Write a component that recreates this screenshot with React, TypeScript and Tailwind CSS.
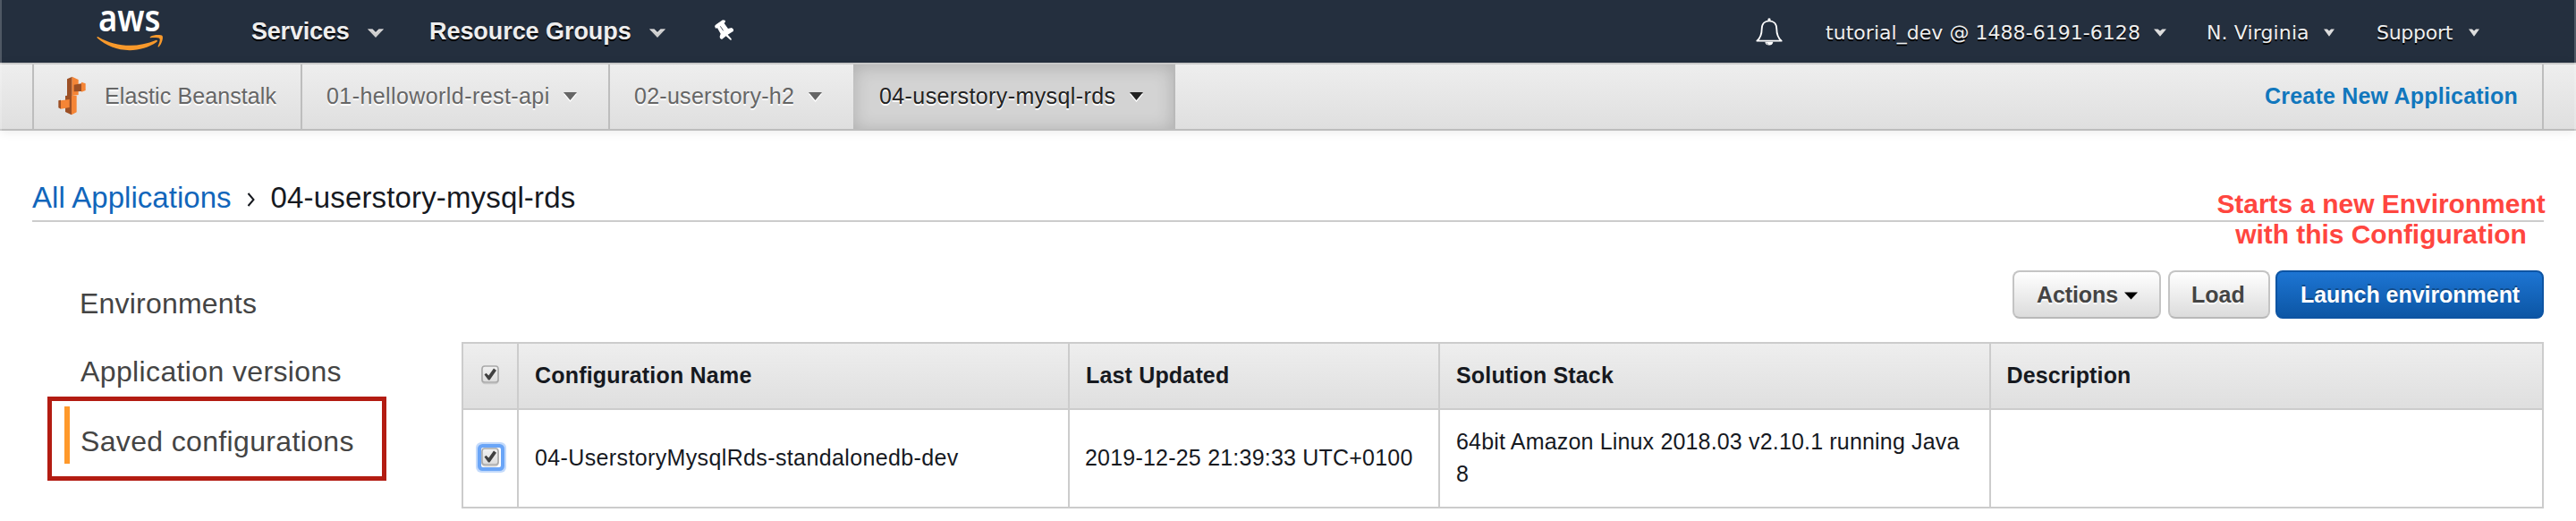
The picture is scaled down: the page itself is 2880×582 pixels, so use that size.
import React from "react";

function AwsLogo() {
  return (
    <svg className="overflow-visible" width="76" height="48" viewBox="0 0 76 48" aria-label="aws">
      <text
        x="2"
        y="23.5"
        fontFamily="'Noto Sans', 'Open Sans', sans-serif"
        fontSize="41"
        fontWeight="600"
        fill="#fff"
        textLength="69.5"
        lengthAdjust="spacingAndGlyphs"
      >
        aws
      </text>
      <path
        d="M0.4 30.6 C0.6 29.8 1.4 29.9 2.2 30.4 C13 36.6 25 39.7 37.5 39.7 C47 39.7 57 37.7 66.2 33.9 C67.6 33.3 68.7 34.8 67.4 35.8 C59 42 47.3 45.2 37 45.2 C23 45.2 10.5 40.2 0.8 31.6 Z"
        fill="#f8992b"
      />
      <path
        d="M60.3 31.2 C59.4 31.3 59.3 30.5 60.1 30 C63.9 27.4 72.3 27.7 73.5 29 C74.8 30.7 73.2 37.9 69.7 41.2 C69 41.8 68.3 41.5 68.6 40.7 C69.5 38.7 71.4 33.6 70.5 32.2 C69.5 30.8 63.5 30.9 60.3 31.2 Z"
        fill="#f8992b"
      />
    </svg>
  );
}

function NavCaret() {
  return (
    <svg width="18" height="10" viewBox="0 0 18 10">
      <path d="M0 0.5 H5.5 L9 4 L12.5 0.5 H18 L9 10 Z" fill="#ccc" />
      <path d="M0 0.5 H5.5 L9 4 L12.5 0.5 H18 L16.5 2 H13 L9 6 L5 2 H1.5 Z" fill="#eee" opacity="0.5" />
    </svg>
  );
}

function SmallCaret({ className }: { className: string }) {
  return (
    <svg className={className} height="9" viewBox="0 0 14 9" preserveAspectRatio="none">
      <path d="M0 0.5 H4.5 L7 2.5 L9.5 0.5 H14 L7 8.8 Z" fill="#ddd" />
    </svg>
  );
}

function TabCaret({ fill }: { fill: string }) {
  return (
    <svg width="15" height="11" viewBox="0 0 15 11">
      <path d="M0 2 H15 L7.5 11 Z" fill="#fff" />
      <path d="M0 0 H15 L7.5 9 Z" fill={fill} />
    </svg>
  );
}

function PinIcon() {
  return (
    <svg width="22" height="24" viewBox="957 66 66 72">
      <path
        d="M957 87 L962 82 L984 67 L992 68 L993 73 L989 78 L1002 96 L1014 93 L1020 98 L1020 104 L1001 116 L1013 130 L1013 134 L1010 134 L995 121 L981 132 L975 128 L974 122 L977 113 L966 94 L960 95 Z"
        fill="#fff"
      />
      <path d="M976 88 L986 103" stroke="#242f3e" strokeWidth="2.5" />
    </svg>
  );
}

function BellIcon() {
  return (
    <svg width="30" height="31" viewBox="131 59 90 93">
      <path
        d="M135 136 H217 C205 125 201 116 201 97 C201 78 190 69 176 69 C162 69 151 78 151 97 C151 116 147 125 135 136 Z"
        fill="none"
        stroke="#fff"
        strokeWidth="5.5"
        strokeLinejoin="round"
      />
      <circle cx="176" cy="65" r="5" fill="#fff" />
      <path d="M162 139 H189 C188 147 183 150.5 176 150.5 C169 150.5 163 147 162 139 Z" fill="#fff" />
      <path d="M167 142 C168 145 170 147 173 148" stroke="#242f3e" strokeWidth="1.5" fill="none" />
    </svg>
  );
}

function BeanstalkIcon() {
  return (
    <svg width="31" height="44" viewBox="196 256 93 132">
      <path d="M226 266 L243 258 V322 H226 Z" fill="#9d5025" />
      <path d="M243 258 L264 268 V319 L243 322 Z" fill="#f58536" />
      <path d="M249 285 L274 281 V307 L249 308 Z" fill="#9d5025" />
      <path d="M274 276 L288 281 V304 L274 309 Z" fill="#f58536" />
      <path d="M220 322 L241 320 V386 L220 376 Z" fill="#9d5025" />
      <path d="M241 322 H258 V377 L241 386 Z" fill="#f58536" />
      <path d="M197 338 L205 336 V366 L197 362 Z" fill="#9d5025" />
      <path d="M205 338 L234 334 V361 L205 366 Z" fill="#f58536" />
    </svg>
  );
}

function Checkbox({ focused = false }: { focused?: boolean }) {
  return (
    <span
      className={
        focused
          ? "flex size-[22px] rounded-[2px] bg-white shadow-[0_0_0_4px_#6aa5f7,0_0_0_6px_#c3dafb]"
          : "flex size-[22px]"
      }
    >
      <svg width="22" height="22" viewBox="0 0 22 22">
        <defs>
          <linearGradient id="box" x1="0" y1="0" x2="0" y2="1">
            <stop offset="0" stopColor="#f2f2f2" />
            <stop offset="1" stopColor="#dcdcdc" />
          </linearGradient>
        </defs>
        <rect x="1" y="2" width="18" height="18.5" rx="3.5" fill="none" stroke="#c9c9c9" strokeWidth="1.5" />
        <rect x="1" y="1" width="18" height="18" rx="3" fill="url(#box)" stroke="#a9a9a9" strokeWidth="1.6" />
        <path d="M3.5 10.5 L5.5 8.8 L8.3 11.5 L14 3.6 L17 5.8 L9.5 16.5 L8 16.5 Z" fill="#404040" />
      </svg>
    </span>
  );
}

const navText = "font-bold text-[27px] leading-[70px] whitespace-nowrap [text-shadow:0_2px_0_#000]";
const metaText =
  "font-['DejaVu_Sans',sans-serif] text-[22px] leading-[67px] pt-[3px] whitespace-nowrap [text-shadow:0_2px_0_#000]";

function TopBar() {
  return (
    <header className="flex h-[70px] bg-[#242f3e] text-[#eee]">
      <div className="w-[281px] pl-[108px] pt-[11px]">
        <AwsLogo />
      </div>
      <div className="flex w-[199px] items-center">
        <span className={`w-[130px] tracking-[-0.2px] ${navText}`}>Services</span>
        <span className="pt-[3px]"><NavCaret /></span>
      </div>
      <div className="flex w-[319px] items-center">
        <span className={`w-[246px] tracking-[-0.06px] ${navText}`}>Resource Groups</span>
        <span className="pt-[3px]"><NavCaret /></span>
      </div>
      <div className="pt-[22px]">
        <PinIcon />
      </div>
      <div className="ml-auto flex pr-[108px]">
        <div className="w-[78px] pt-[20px]">
          <BellIcon />
        </div>
        <div className="flex w-[426px] items-center">
          <span className={`w-[367px] tracking-[0.04px] ${metaText}`}>tutorial_dev @ 1488-6191-6128</span>
          <SmallCaret className="mt-[2px] w-[14px]" />
        </div>
        <div className="flex w-[190px] items-center">
          <span className={`w-[131px] tracking-[0.12px] ${metaText}`}>N. Virginia</span>
          <SmallCaret className="mt-[2px] w-[12px]" />
        </div>
        <div className="flex items-center">
          <span className={`w-[103px] tracking-[-0.27px] ${metaText}`}>Support</span>
          <SmallCaret className="mt-[2px] w-[12px]" />
        </div>
      </div>
    </header>
  );
}

const tabText = "text-[25px] leading-[70px] pb-[2px] whitespace-nowrap";

function TabBar() {
  return (
    <nav className="relative z-10 flex h-[76px] border-t-2 border-b-2 border-t-[#c8c8c8] border-b-[#bdbdbd] bg-linear-to-b from-[#eee] to-[#dfdfdf] pl-[36px] pr-[36px] text-[#666] shadow-[0_2px_10px_rgba(0,0,0,0.08)] [text-shadow:0_2px_0_#fff]">
      <div className="flex w-[302px] items-center border-x-2 border-[#bdbdbd] pl-[27px]">
        <span className="mt-[-2px]"><BeanstalkIcon /></span>
        <span className={`ml-[21px] tracking-[0.1px] ${tabText}`}>Elastic Beanstalk</span>
      </div>
      <div className="flex w-[344px] items-center border-r-2 border-[#bdbdbd] pl-[27px]">
        <span className={`w-[265px] tracking-[0.42px] ${tabText}`}>01-helloworld-rest-api</span>
        <TabCaret fill="#666" />
      </div>
      <div className="flex w-[272px] items-center pl-[27px]">
        <span className={`w-[195px] tracking-[0.27px] ${tabText}`}>02-userstory-h2</span>
        <TabCaret fill="#666" />
      </div>
      <div className="flex w-[360px] items-center border-r-2 border-[#b9b9b9] bg-[#d3d3d3] pl-[29px] text-[#222] shadow-[inset_0_2px_20px_rgba(0,0,0,0.18)]">
        <span className={`w-[280px] tracking-[0.4px] ${tabText}`}>04-userstory-mysql-rds</span>
        <TabCaret fill="#222" />
      </div>
      <a className="ml-auto w-[313px] border-r-2 border-[#bdbdbd] pl-px text-[25px] leading-[70px] font-bold tracking-[0.21px] whitespace-nowrap text-[#1177bd] [text-shadow:none]">
        Create New Application
      </a>
    </nav>
  );
}

const button =
  "flex h-[54px] items-center rounded-[8px] border-2 text-[25px] leading-[50px] font-bold whitespace-nowrap";
const grayButton =
  "border-[#c4c4c4] border-b-[#b8b8b8] bg-linear-to-b from-white to-[#dcdcdc] text-[#444] [text-shadow:0_2px_0_#fff]";

const headCell = "bg-linear-to-b from-[#eee] to-[#dfdfdf] text-[25px] leading-[70px] font-bold";
const bodyCell = "flex items-center bg-white pb-[2px] text-[25px] leading-[36px]";

export default function App() {
  return (
    <div className="relative h-[582px] w-[2880px] overflow-hidden bg-white font-['Liberation_Sans',Arial,sans-serif] text-[#16191f]">
      <TopBar />
      <TabBar />

      <div className="px-[36px] pt-[49px]">
        <div className="flex h-[53px] border-b-2 border-[#ccc] text-[33px] leading-[51px] whitespace-nowrap">
          <a className="tracking-[0.04px] text-[#1166bb]">All Applications</a>
          <svg className="mt-[20px] mr-[17px] ml-[17px]" width="10" height="16" viewBox="0 0 10 16">
            <path d="M1.5 1 L7.5 8 L1.5 15" fill="none" stroke="#16191f" strokeWidth="2" />
          </svg>
          <span className="tracking-[0.15px]">04-userstory-mysql-rds</span>
        </div>
      </div>

      <div className="flex pr-[36px]">
        <aside className="w-[516px] pt-[53px] pl-[53px] text-[32px] text-[#444]">
          <div className="h-[76px] pl-[36px] leading-[76px] tracking-[0.21px]">Environments</div>
          <div className="h-[76px] pl-[37px] leading-[76px] tracking-[0.37px]">Application versions</div>
          <div className="relative h-[80px] pt-px pl-[37px] leading-[78px] tracking-[0.35px]">
            Saved configurations
            <span className="absolute top-px left-[19px] h-[64px] w-[6px] bg-[#ff992b]" />
            <span className="absolute top-[-10px] left-0 h-[94px] w-[379px] border-5 border-[#b31c12]" />
          </div>
        </aside>

        <main className="w-[2328px] pt-[54px]">
          <div className="flex justify-end">
            <button className={`mr-[8px] w-[166px] pl-[25px] tracking-[-0.1px] ${button} ${grayButton}`}>
              Actions
              <svg className="mt-[2px] ml-[7px]" width="15" height="9" viewBox="0 0 15 9">
                <path d="M0 0.5 H15 L7.5 8.5 Z" fill="#000" />
              </svg>
            </button>
            <button className={`mr-[6px] w-[114px] pl-[24px] ${button} ${grayButton}`}>Load</button>
            <button
              className={`w-[300px] border-[#0d54a3] bg-linear-to-b from-[#1d75d3] to-[#0c56a5] pl-[26px] tracking-[-0.04px] text-white [text-shadow:0_-2px_0_rgba(0,0,0,0.3)] ${button}`}
            >
              Launch environment
            </button>
          </div>

          <div className="mt-[26px] grid grid-cols-[60px_614px_412px_614px_616px] grid-rows-[72px_108px] gap-[2px] bg-[#ccc] p-[2px]">
            <div className={`pt-[24px] pl-[20px] ${headCell}`}><Checkbox /></div>
            <div className={`pl-[18px] tracking-[0.2px] ${headCell}`}>Configuration Name</div>
            <div className={`pl-[18px] tracking-[0.17px] ${headCell}`}>Last Updated</div>
            <div className={`pl-[18px] tracking-[0.17px] ${headCell}`}>Solution Stack</div>
            <div className={`pl-[17.500px] tracking-[0.13px] ${headCell}`}>Description</div>

            <div className={`pl-[20px] ${bodyCell}`}><Checkbox focused /></div>
            <div className={`pl-[18px] tracking-[0.37px] ${bodyCell}`}>04-UserstoryMysqlRds-standalonedb-dev</div>
            <div className={`pl-[17px] tracking-[0.21px] ${bodyCell}`}>2019-12-25 21:39:33 UTC+0100</div>
            <div className={`pr-[20px] pl-[18px] tracking-[0.17px] ${bodyCell}`}>
              64bit Amazon Linux 2018.03 v2.10.1 running Java 8
            </div>
            <div className={bodyCell} />
          </div>
        </main>
      </div>

      <p className="absolute top-[211px] left-[2462px] w-[400px] text-center text-[30px] leading-[34px] font-bold tracking-[-0.05px] whitespace-nowrap text-[#ff463f]">
        Starts a new Environment
        <br />
        with this Configuration
      </p>
      <span className="absolute top-0 left-0 z-20 h-[146px] w-[2px] bg-white/20" />
      <span className="absolute top-0 right-0 z-20 h-[146px] w-[2px] bg-white/20" />
    </div>
  );
}
